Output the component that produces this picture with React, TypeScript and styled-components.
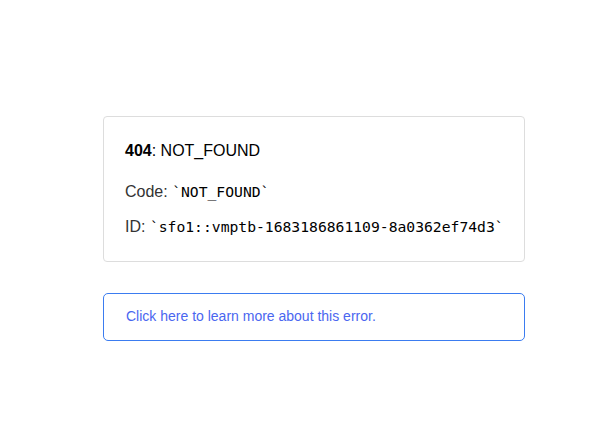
import styled, { createGlobalStyle } from "styled-components";

const GlobalStyle = createGlobalStyle`
	html, body {
		margin: 0;
		padding: 0;
		background: #fff;
	}
	body {
		font-family: "Liberation Sans", Arial, sans-serif;
	}
`;

const Page = styled.div`
	width: 608px;
	height: 423px;
	box-sizing: border-box;
	padding: 116px 0 0 103px;
`;

const Main = styled.main`
	width: 422px;
	display: flex;
	flex-direction: column;
	gap: 31px;
`;

const InfoCard = styled.div`
	border: 1px solid #dddddd;
	border-radius: 4px;
	padding: 25px 21px 25px 21px;
	display: flex;
	flex-direction: column;
	gap: 17px;
`;

const Title = styled.h1`
	margin: 0 0 6px;
	font-size: 16px;
	font-weight: 400;
	line-height: 18px;
	color: #000;
	b {
		font-weight: 700;
	}
`;

const Line = styled.p`
	margin: 0;
	font-size: 16px;
	line-height: 18px;
	color: #333;
	white-space: nowrap;
`;

const Code = styled.code`
	font-family: "DejaVu Sans Mono", "Liberation Mono", monospace;
	font-size: 14.7px;
	color: #000;
`;

const NoteLink = styled.a`
	display: block;
	border: 1px solid #3b7cf0;
	border-radius: 5px;
	padding: 14px 22px 16px;
	font-size: 14px;
	line-height: 16px;
	color: #4a66f0;
	text-decoration: none;
`;

export default function App() {
	return (
		<Page>
			<GlobalStyle />
			<Main>
				<InfoCard>
					<Title>
						<b>404</b>: NOT_FOUND
					</Title>
					<Line>
						Code: <Code>`NOT_FOUND`</Code>
					</Line>
					<Line>
						ID: <Code>`sfo1::vmptb-1683186861109-8a0362ef74d3`</Code>
					</Line>
				</InfoCard>
				<NoteLink href="#">Click here to learn more about this error.</NoteLink>
			</Main>
		</Page>
	);
}
